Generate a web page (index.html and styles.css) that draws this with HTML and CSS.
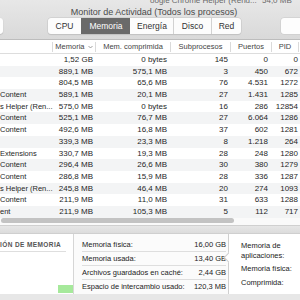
FILE: index.html
```html
<!DOCTYPE html>
<html lang="es">

<head>
  <meta charset="UTF-8">
  <title>Monitor de Actividad</title>
  <link rel="stylesheet" href="styles.css">
</head>

<body>
  <div class="window">
    <div class="toolbar">
      <div class="ghost">
        <span class="ghost-name">oogle Chrome Helper (Rend...</span>
        <span class="ghost-mem">54,0 MB</span>
      </div>
      <div class="title">Monitor de Actividad (Todos los procesos)</div>
      <div class="tools">
        <div class="stub"></div>
        <div class="segmented">
          <div class="seg seg-cpu">CPU</div>
          <div class="seg seg-mem active">Memoria</div>
          <div class="seg seg-energy">Energía</div>
          <div class="seg seg-disk">Disco</div>
          <div class="seg seg-net">Red</div>
        </div>
        <div class="search"></div>
      </div>
    </div>

    <div class="table">
      <div class="row head">
        <div class="hc"></div>
        <div class="hc">Memoria <svg class="chev" width="5" height="4" viewBox="0 0 5 4"><path d="M0.5 1 L2.5 3 L4.5 1" fill="none" stroke="#888" stroke-width="0.8"/></svg></div>
        <div class="hc">Mem. comprimida</div>
        <div class="hc">Subprocesos</div>
        <div class="hc">Puertos</div>
        <div class="hc">PID</div>
        <div class="hc"></div>
      </div>
      <div id="rows"></div>
    </div>

    <div class="hscroll">
      <div class="thumb"></div>
    </div>
    <div class="divider"></div>

    <div class="bottom">
      <div class="pressure">
        <div class="pressure-title">IÓN DE MEMORIA</div>
        <div class="graph">
          <div class="bar"></div>
        </div>
      </div>
      <div class="stats">
        <div class="stat"><span>Memoria física:</span><span>16,00 GB</span></div>
        <div class="stat"><span>Memoria usada:</span><span>13,40 GB</span></div>
        <div class="stat"><span>Archivos guardados en caché:</span><span>2,44 GB</span></div>
        <div class="stat"><span>Espacio de intercambio usado:</span><span>120,3 MB</span></div>
      </div>
      <div class="legend">
        <div class="legend-item">Memoria de<br>aplicaciones:</div>
        <div class="legend-item">Memoria física:</div>
        <div class="legend-item">Comprimida:</div>
      </div>
    </div>
    <div class="footer"></div>
  </div>

  <script>
    var procesos = [
      ["", "1,52 GB", "0 bytes", "145", "0", "0"],
      ["", "889,1 MB", "575,1 MB", "3", "450", "672"],
      ["", "804,5 MB", "65,6 MB", "76", "4.531", "1272"],
      ["Content", "589,1 MB", "20,1 MB", "27", "1.431", "1285"],
      ["s Helper (Ren...", "575,0 MB", "0 bytes", "16", "286", "12854"],
      ["Content", "525,1 MB", "76,7 MB", "27", "6.064", "1286"],
      ["Content", "492,6 MB", "16,8 MB", "37", "602", "1281"],
      ["", "339,3 MB", "23,3 MB", "8", "1.218", "264"],
      ["Extensions", "330,7 MB", "19,3 MB", "28", "248", "1280"],
      ["Content", "296,4 MB", "26,6 MB", "30", "380", "1279"],
      ["Content", "286,8 MB", "15,9 MB", "28", "336", "1287"],
      ["s Helper (Ren...", "245,8 MB", "46,4 MB", "20", "274", "1093"],
      ["Content", "211,9 MB", "11,0 MB", "31", "633", "1288"],
      ["ent", "211,9 MB", "105,3 MB", "5", "112", "717"]
    ];

    const rows = document.getElementById("rows");

    procesos.forEach((p, i) => {
      const row = document.createElement("div");
      row.className = "row" + (i % 2 === 1 ? " striped" : "");
      p.forEach((value, col) => {
        const cell = document.createElement("div");
        cell.className = col === 0 ? "cell name" : "cell num c" + col;
        cell.textContent = value;
        row.appendChild(cell);
      });
      row.appendChild(document.createElement("div"));
      rows.appendChild(row);
    });
  </script>
</body>

</html>
```

FILE: styles.css
```css
body {
  margin: 0;
  font-family: 'Liberation Sans', Arial, sans-serif;
  background-color: #ececec;
  color: #1f1f1f;
}

.window {
  width: 300px;
  height: 300px;
  overflow: hidden;
  background-color: #ffffff;
}

/* barra superior */
.toolbar {
  height: 39px;
  background: linear-gradient(#e7e7e7, #d9d9d9);
  border-bottom: 1px solid #bdbdbd;
}

.ghost {
  height: 6px;
  overflow: hidden;
  display: flex;
  font-size: 8px;
  line-height: 8px;
  color: #6a6a6a;
  white-space: nowrap;
}

.ghost-name {
  margin: -3px 0 0 150px;
  width: 112px;
  flex-shrink: 0;
}

.ghost-mem {
  margin-top: -3px;
  flex-shrink: 0;
}

.title {
  height: 12px;
  line-height: 12px;
  font-size: 9px;
  color: #4b4b4b;
  text-align: center;
  padding-left: 8px;
}

.tools {
  display: flex;
  height: 16px;
}

.tools > div {
  flex-shrink: 0;
}

.stub {
  width: 3px;
  background-color: #fdfdfd;
  border-radius: 0 3px 3px 0;
  box-shadow: 0 0.5px 1px rgba(0, 0, 0, 0.25);
}

.segmented {
  display: flex;
  margin-left: 45px;
  border-radius: 3px;
  overflow: hidden;
  box-shadow: 0 0 0 0.5px #c4c4c4, 0 1px 1px rgba(0, 0, 0, 0.12);
  background-color: #fcfcfc;
}

.seg {
  font-size: 8.5px;
  line-height: 16px;
  color: #333;
  text-align: center;
  border-left: 1px solid #d2d2d2;
}

.seg:first-child {
  border-left: none;
}

.seg-cpu { width: 33px; }
.seg-mem { width: 48px; }
.seg-energy { width: 42px; }
.seg-disk { width: 37px; }
.seg-net { width: 29px; }

.seg.active {
  background-color: #6a6a6a;
  color: #ffffff;
  border-left-color: #6a6a6a;
}

.seg.active + .seg {
  border-left-color: transparent;
}

.search {
  width: 40px;
  margin-left: 40px;
  background-color: #fdfdfd;
  border-radius: 3px;
  box-shadow: 0 0 0 0.5px #c8c8c8;
}

/* tabla de procesos */
.row {
  display: grid;
  grid-template-columns: 52px 43px 75px 60px 41px 27px 2px;
  height: 11.7px;
  line-height: 11.7px;
  font-size: 8px;
  white-space: nowrap;
}

.row.striped {
  background-color: #f3f4f5;
}

.row.head {
  height: 13px;
  align-items: center;
  border-bottom: 1px solid #dddddd;
  font-size: 7.5px;
  color: #444;
}

.hc {
  height: 10px;
  line-height: 10px;
  text-align: center;
  border-left: 1px solid #dadada;
}

.hc:first-child {
  border-left: none;
}

.chev {
  vertical-align: middle;
  margin-left: 1px;
}

.name {
  text-align: left;
  font-size: 7.5px;
}

.num {
  text-align: right;
}

.c1 { padding-right: 2px; }
.c2 { padding-right: 3px; }
.c3 { padding-right: 2px; }
.c4 { padding-right: 3px; }
.c5 { padding-right: 1px; margin-right: -1px; }

.hscroll {
  height: 7px;
  background-color: #fafafa;
  padding-top: 0.5px;
}

.thumb {
  width: 233px;
  height: 5px;
  margin-left: 1px;
  border-radius: 3px;
  background-color: #c3c3c3;
}

.divider {
  height: 7px;
  background: linear-gradient(#e6e6e6, #dcdcdc);
  border-top: 1px solid #d0d0d0;
  border-bottom: 1px solid #cfcfcf;
}

/* panel inferior */
.bottom {
  display: grid;
  grid-template-columns: 74px 154px 72px;
  height: 60px;
  background-color: #fbfbfb;
}

.pressure {
  border-right: 1px solid #d6d6d6;
  background-color: #ffffff;
  display: flex;
  flex-direction: column;
}

.pressure-title {
  margin: 7px 7px 0 0;
  padding-bottom: 3px;
  border-bottom: 1px solid #dedede;
  font-size: 6.5px;
  font-weight: bold;
  letter-spacing: 0.4px;
  color: #555;
  white-space: nowrap;
}

.graph {
  flex: 1;
  display: flex;
  justify-content: flex-end;
  align-items: flex-end;
  padding-bottom: 1px;
}

.bar {
  width: 15px;
  height: 8px;
  background-color: #a6e99b;
}

.stats {
  padding: 4px 2px 0 8px;
}

.stat {
  display: flex;
  justify-content: space-between;
  height: 13px;
  line-height: 13px;
  font-size: 7.5px;
  color: #222;
  border-bottom: 1px solid #dedede;
  white-space: nowrap;
}

.stat:last-child {
  border-bottom: none;
}

.legend {
  position: relative;
  background-color: #ffffff;
  border-left: 1px solid #cfcfcf;
  padding: 7px 0 0 12px;
}

.legend::before {
  content: "";
  position: absolute;
  left: -4px;
  top: 20px;
  width: 6px;
  height: 6px;
  background-color: #ffffff;
  border-left: 1px solid #cfcfcf;
  border-bottom: 1px solid #cfcfcf;
  transform: rotate(45deg);
}

.legend-item {
  font-size: 7.5px;
  line-height: 9.5px;
  color: #222;
  margin-bottom: 4px;
  white-space: nowrap;
}

.footer {
  height: 8px;
  background-color: #e7e7e7;
}
```
